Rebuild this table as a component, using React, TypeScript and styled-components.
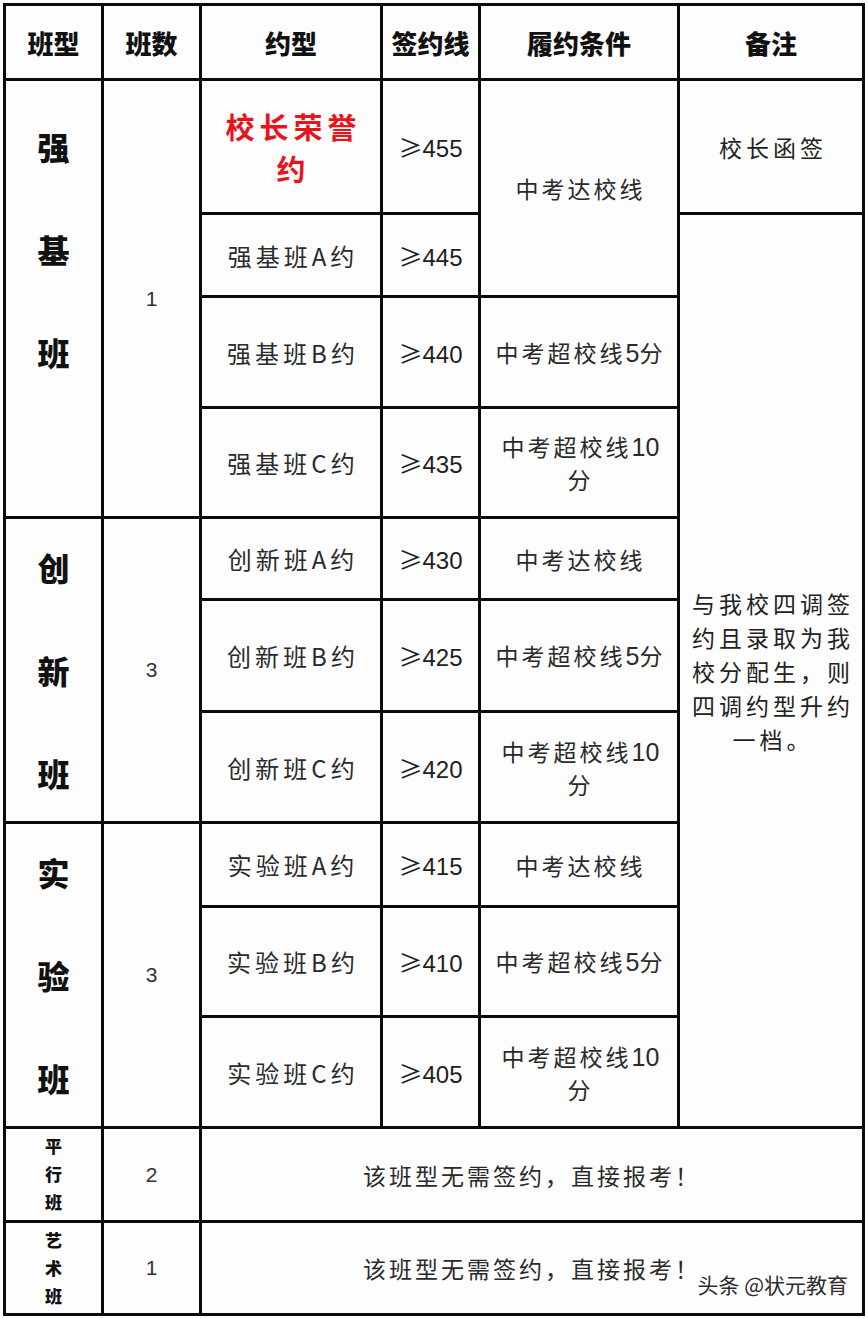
import React, { FC } from 'react';
import styled, { createGlobalStyle } from 'styled-components';

const GlobalStyle = createGlobalStyle`
  html, body {
    margin: 0;
    padding: 0;
    background: #ffffff;
  }
  body {
    font-family: "Noto Sans CJK SC", "Noto Sans", sans-serif;
    color: #222;
  }
`;

const Sheet = styled.div`
  position: relative;
  display: grid;
  grid-template-columns: 95px 95px 178px 95px 196px 182px;
  grid-template-rows: 72px 131px 80px 108px 107px 79px 109px 108px 81px 107px 108px 91px 90px;
  gap: 3px;
  padding: 3px;
  width: max-content;
  margin: 3px 0 0 3px;
  background: #0b0b0b;
`;

const Cell = styled.div<{ $col: string; $row: string }>`
  grid-column: ${(p) => p.$col};
  grid-row: ${(p) => p.$row};
  display: flex;
  flex-direction: column;
  align-items: center;
  justify-content: center;
  text-align: center;
  overflow: hidden;
  background: #fdfdfe;
`;

const GroupCell = styled(Cell)<{ $top?: number }>`
  justify-content: ${(p) => (p.$top !== undefined ? 'flex-start' : 'center')};
  padding-top: ${(p) => p.$top ?? 0}px;
  box-sizing: border-box;
`;

const HeadText = styled.div`
  font-size: 26px;
  font-weight: 900;
  color: #111;
`;

const GroupChar = styled.div<{ $small?: boolean }>`
  font-size: ${(p) => (p.$small ? 17 : 32)}px;
  line-height: ${(p) => (p.$small ? 28 : 103)}px;
  font-weight: 900;
  color: #111;
`;

const Count = styled.div`
  font-family: "Liberation Sans", Arial, sans-serif;
  font-size: 21px;
  color: #333;
`;

const Plan = styled.div`
  font-size: 24px;
  letter-spacing: 4px;
  color: #2a2a2a;
  padding-left: 4px;
`;

const HonorPlan = styled.div`
  font-size: 29px;
  line-height: 42px;
  font-weight: 700;
  letter-spacing: 5px;
  padding-left: 5px;
  color: #e8141c;
`;

const Score = styled.div`
  font-family: "Liberation Sans", Arial, sans-serif;
  font-size: 24px;
  color: #1e1e1e;
  white-space: nowrap;
`;

const Ge = styled.span`
  font-family: "Noto Sans CJK SC", sans-serif;
  font-size: 24px;
`;

const Cond = styled.div`
  font-size: 23px;
  line-height: 32px;
  letter-spacing: 3px;
  padding-left: 3px;
  color: #2a2a2a;
  white-space: nowrap;
`;

const Num = styled.span`
  font-family: "Liberation Sans", Arial, sans-serif;
  font-size: 25px;
  letter-spacing: 0;
`;

const Note = styled.div`
  font-size: 23px;
  line-height: 34px;
  letter-spacing: 4px;
  padding-left: 4px;
  color: #222;
  white-space: nowrap;
`;

const Notice = styled.div`
  font-size: 23px;
  letter-spacing: 3px;
  color: #2a2a2a;
`;

const Watermark = styled.div`
  position: absolute;
  right: 17px;
  bottom: 17px;
  font-size: 21px;
  color: #2d2d2d;
  white-space: nowrap;
  text-shadow: 0 0 2px #fff, 0 0 2px #fff;
`;

interface IPlan {
  name: string;
  score: string;
  cond?: 'reach' | 'five' | 'ten';
}

interface IGroup {
  name: string[];
  count: string;
  start: number;
  top?: number;
  plans: IPlan[];
}

const groups: IGroup[] = [
  {
    name: ['强', '基', '班'],
    count: '1',
    start: 2,
    top: 14,
    plans: [
      { name: 'honor', score: '455' },
      { name: '强基班A约', score: '445' },
      { name: '强基班B约', score: '440', cond: 'five' },
      { name: '强基班C约', score: '435', cond: 'ten' },
    ],
  },
  {
    name: ['创', '新', '班'],
    count: '3',
    start: 6,
    plans: [
      { name: '创新班A约', score: '430', cond: 'reach' },
      { name: '创新班B约', score: '425', cond: 'five' },
      { name: '创新班C约', score: '420', cond: 'ten' },
    ],
  },
  {
    name: ['实', '验', '班'],
    count: '3',
    start: 9,
    plans: [
      { name: '实验班A约', score: '415', cond: 'reach' },
      { name: '实验班B约', score: '410', cond: 'five' },
      { name: '实验班C约', score: '405', cond: 'ten' },
    ],
  },
];

const Condition: FC<{ kind: 'reach' | 'five' | 'ten' }> = ({ kind }) => {
  if (kind === 'reach') return <Cond>中考达校线</Cond>;
  if (kind === 'five')
    return (
      <Cond>
        中考超校线<Num>5</Num>分
      </Cond>
    );
  return (
    <Cond>
      中考超校线<Num>10</Num>
      <br />分
    </Cond>
  );
};

const headers = ['班型', '班数', '约型', '签约线', '履约条件', '备注'];

const App: FC = () => (
  <>
    <GlobalStyle />
    <Sheet>
      {headers.map((h, i) => (
        <Cell key={h} $col={`${i + 1}`} $row="1">
          <HeadText>{h}</HeadText>
        </Cell>
      ))}

      {groups.map((g) => {
        const end = g.start + g.plans.length;
        return (
          <React.Fragment key={g.start}>
            <GroupCell $col="1" $row={`${g.start} / ${end}`} $top={g.top}>
              {g.name.map((c, i) => (
                <GroupChar key={i}>{c}</GroupChar>
              ))}
            </GroupCell>
            <Cell $col="2" $row={`${g.start} / ${end}`}>
              <Count>{g.count}</Count>
            </Cell>
            {g.plans.map((p, i) => {
              const row = `${g.start + i}`;
              return (
                <React.Fragment key={p.name}>
                  <Cell $col="3" $row={row}>
                    {p.name === 'honor' ? (
                      <HonorPlan>
                        校长荣誉
                        <br />约
                      </HonorPlan>
                    ) : (
                      <Plan>{p.name}</Plan>
                    )}
                  </Cell>
                  <Cell $col="4" $row={row}>
                    <Score>
                      <Ge>≥</Ge>
                      {p.score}
                    </Score>
                  </Cell>
                  {p.cond && (
                    <Cell $col="5" $row={row}>
                      <Condition kind={p.cond} />
                    </Cell>
                  )}
                </React.Fragment>
              );
            })}
          </React.Fragment>
        );
      })}

      <Cell $col="5" $row="2 / 4">
        <Condition kind="reach" />
      </Cell>

      <Cell $col="6" $row="2">
        <Note>校长函签</Note>
      </Cell>
      <Cell $col="6" $row="3 / 12">
        <Note>
          与我校四调签
          <br />
          约且录取为我
          <br />
          校分配生，则
          <br />
          四调约型升约
          <br />
          一档。
        </Note>
      </Cell>

      <GroupCell $col="1" $row="12" $top={3}>
        <GroupChar $small>平</GroupChar>
        <GroupChar $small>行</GroupChar>
        <GroupChar $small>班</GroupChar>
      </GroupCell>
      <Cell $col="2" $row="12">
        <Count>2</Count>
      </Cell>
      <Cell $col="3 / 7" $row="12">
        <Notice>该班型无需签约，直接报考！</Notice>
      </Cell>

      <GroupCell $col="1" $row="13" $top={3}>
        <GroupChar $small>艺</GroupChar>
        <GroupChar $small>术</GroupChar>
        <GroupChar $small>班</GroupChar>
      </GroupCell>
      <Cell $col="2" $row="13">
        <Count>1</Count>
      </Cell>
      <Cell $col="3 / 7" $row="13">
        <Notice>该班型无需签约，直接报考！</Notice>
      </Cell>

      <Watermark>头条 @状元教育</Watermark>
    </Sheet>
  </>
);

export default App;
